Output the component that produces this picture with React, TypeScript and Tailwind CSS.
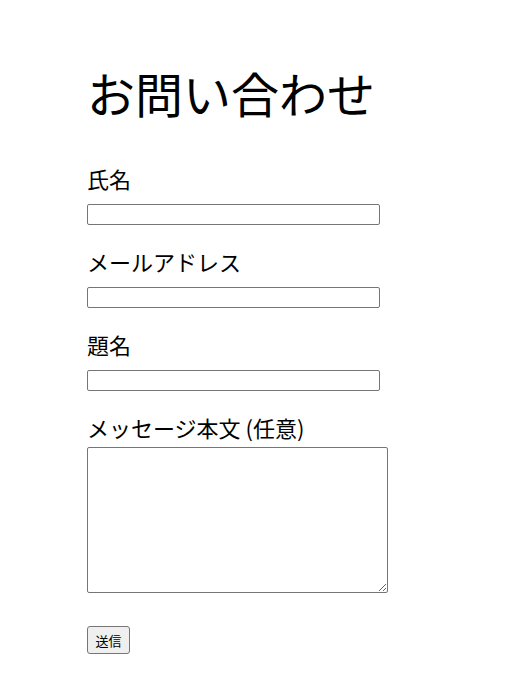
export default function App() {
  const font = { fontFamily: '"Noto Sans CJK JP", "Noto Sans", sans-serif' };
  return (
    <div className="min-h-screen bg-white text-black" style={font}>
      <div className="pl-[87px] pt-[58px]">
        <h1 className="text-[48px] leading-[68px] font-normal">お問い合わせ</h1>
        <form className="mt-[36px] flex flex-col">
          <label className="text-[22px] leading-[32px]">氏名</label>
          <input className="mt-[10px] h-[21px] w-[293px] rounded-[2px] border border-[#767676]" />
          <label className="mt-[20px] text-[22px] leading-[32px]">メールアドレス</label>
          <input className="mt-[10px] h-[21px] w-[293px] rounded-[2px] border border-[#767676]" />
          <label className="mt-[20px] text-[22px] leading-[32px]">題名</label>
          <input className="mt-[10px] h-[21px] w-[293px] rounded-[2px] border border-[#767676]" />
          <label className="mt-[20px] text-[22px] leading-[32px]">メッセージ本文 (任意)</label>
          <textarea className="mt-[4px] h-[146px] w-[301px] rounded-[2px] border border-[#767676]" />
          <div className="mt-[33px]">
            <button
              type="button"
              className="h-[28px] w-[43px] rounded-[3px] border border-[#767676] bg-[#efefef] text-[13px] leading-none"
            >
              送信
            </button>
          </div>
        </form>
      </div>
    </div>
  );
}
